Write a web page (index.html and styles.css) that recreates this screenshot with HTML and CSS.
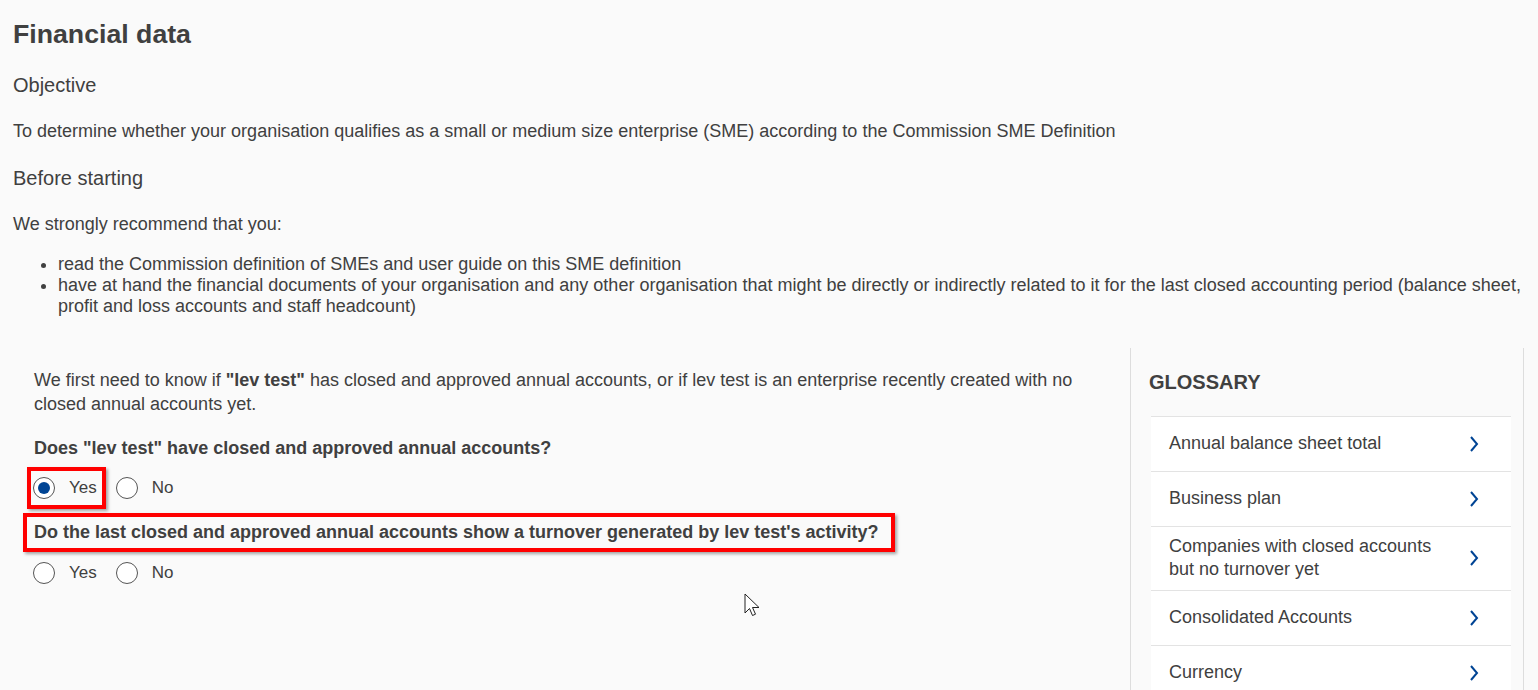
FILE: index.html
```html
<!DOCTYPE html>
<html lang="en">
  <head>
    <meta charset="UTF-8" />
    <meta name="viewport" content="width=device-width, initial-scale=1.0" />
    <title>Financial data</title>
    <link rel="stylesheet" href="styles.css">
  </head>
  <body>
    <div class="page">
      <h1>Financial data</h1>

      <h2>Objective</h2>
      <p>To determine whether your organisation qualifies as a small or medium size enterprise (SME) according to the Commission SME Definition</p>

      <h2>Before starting</h2>
      <p>We strongly recommend that you:</p>
      <ul class="recommend">
        <li>read the Commission definition of SMEs and user guide on this SME definition</li>
        <li>have at hand the financial documents of your organisation and any other organisation that might be directly or indirectly related to it for the last closed accounting period (balance sheet, profit and loss accounts and staff headcount)</li>
      </ul>

      <div class="main">
        <div class="form">
          <p class="intro">We first need to know if <b>"lev test"</b> has closed and approved annual accounts, or if lev test is an enterprise recently created with no closed annual accounts yet.</p>

          <div class="question">Does "lev test" have closed and approved annual accounts?</div>
          <div class="options">
            <label class="opt marked"><span class="radio checked"></span>Yes</label>
            <label class="opt"><span class="radio"></span>No</label>
          </div>

          <div class="question marked-q">Do the last closed and approved annual accounts show a turnover generated by lev test's activity?</div>
          <div class="options">
            <label class="opt"><span class="radio"></span>Yes</label>
            <label class="opt"><span class="radio"></span>No</label>
          </div>
        </div>

        <aside class="glossary">
          <h3>GLOSSARY</h3>
          <ul>
            <li><span>Annual balance sheet total</span><svg class="chev" viewBox="0 0 10 18"><path d="M2 2l6 7-6 7"/></svg></li>
            <li><span>Business plan</span><svg class="chev" viewBox="0 0 10 18"><path d="M2 2l6 7-6 7"/></svg></li>
            <li><span>Companies with closed accounts but no turnover yet</span><svg class="chev" viewBox="0 0 10 18"><path d="M2 2l6 7-6 7"/></svg></li>
            <li><span>Consolidated Accounts</span><svg class="chev" viewBox="0 0 10 18"><path d="M2 2l6 7-6 7"/></svg></li>
            <li><span>Currency</span><svg class="chev" viewBox="0 0 10 18"><path d="M2 2l6 7-6 7"/></svg></li>
          </ul>
        </aside>
      </div>
    </div>

    <svg class="cursor" width="16" height="26" viewBox="0 0 16 26">
      <path d="M1 1v19l4.5-4.5 3 7 3-1.3-3-6.7H15z" fill="#fff" stroke="#222" stroke-width="1"/>
    </svg>
  </body>
</html>
```

FILE: styles.css
```css
body {
  margin: 0;
  background: #fafafa;
  color: #404040;
  font-family: "Liberation Sans", Arial, sans-serif;
  font-size: 18px;
  line-height: 24px;
}

.page {
  padding: 18px 14px 0 13px;
}

h1 {
  margin: 0;
  font-size: 26.7px;
  line-height: 32px;
  font-weight: bold;
}

h2 {
  margin: 23px 0 0;
  font-size: 20px;
  line-height: 24px;
  font-weight: normal;
}

p {
  margin: 22px 0 0;
}

.recommend {
  margin: 18px 0 0;
  padding-left: 45px;
  line-height: 21px;
}

.main {
  display: flex;
  margin-top: 31px;
}

.form {
  flex: 1;
  padding: 20px 21px 0 21px;
}

.form .intro {
  margin: 0;
}

.question {
  margin-top: 20px;
  font-weight: bold;
  line-height: 24px;
}

.options {
  display: flex;
  gap: 4px;
  margin-left: -7px;
  font-size: 17px;
}

.opt {
  display: flex;
  align-items: center;
  height: 34px;
  padding: 0 5px 0 2px;
  border: 4px solid transparent;
  gap: 14px;
}

.opt.marked {
  border-color: #f00;
  box-shadow: 2px 2px 3px rgba(0, 0, 0, 0.35);
}

.question + .options {
  margin-top: 7px;
}

.radio {
  box-sizing: border-box;
  width: 22px;
  height: 22px;
  border: 1.5px solid #555;
  border-radius: 50%;
  background: #fff;
  display: flex;
  align-items: center;
  justify-content: center;
}

.radio.checked::after {
  content: "";
  width: 12px;
  height: 12px;
  border-radius: 50%;
  background: #004494;
}

.marked-q {
  display: inline-block;
  margin: 4px 0 0 -11px;
  padding: 3px 12px 4px 7px;
  border: 4px solid #f00;
  box-shadow: 2px 2px 3px rgba(0, 0, 0, 0.35);
}

.marked-q + .options {
  margin-top: 0;
}

.glossary {
  box-sizing: border-box;
  width: 394px;
  border-left: 1px solid #ddd;
  border-right: 1px solid #ddd;
  padding: 22px 12px 0 20px;
}

.glossary h3 {
  margin: 0 0 0 -2px;
  font-size: 20px;
  line-height: 24px;
  font-weight: bold;
}

.glossary ul {
  list-style: none;
  margin: 22px 0 0;
  padding: 0;
}

.glossary li {
  display: flex;
  align-items: center;
  justify-content: space-between;
  min-height: 37px;
  padding: 8px 32px 9px 18px;
  background: #fff;
  border-top: 1px solid #e3e3e3;
  font-size: 18px;
  line-height: 23px;
}

.glossary li span {
  max-width: 270px;
}

.chev {
  width: 10px;
  height: 18px;
  flex-shrink: 0;
}

.chev path {
  fill: none;
  stroke: #004494;
  stroke-width: 2;
}

.cursor {
  position: absolute;
  left: 744px;
  top: 593px;
}
```
